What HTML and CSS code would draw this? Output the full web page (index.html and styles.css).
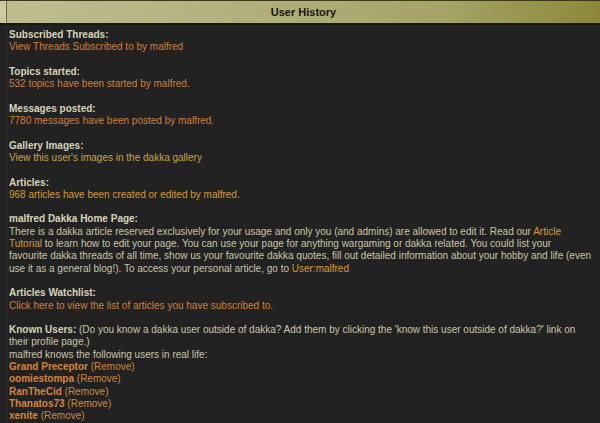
FILE: index.html
```html
<!DOCTYPE html>
<html>
<head>
<meta charset="utf-8">
<link rel="stylesheet" href="styles.css">
</head>
<body>
<div class="page">
  <div class="hdr">
    <div class="hdr-edge"></div>
    <div class="hdr-title">User History</div>
  </div>
  <div class="content">
    <div class="block">
      <div class="h">Subscribed Threads:</div>
      <a class="lnk">View Threads Subscribed to by malfred</a>
    </div>
    <div class="block">
      <div class="h">Topics started:</div>
      <a class="lnk">532 topics have been started by malfred.</a>
    </div>
    <div class="block">
      <div class="h">Messages posted:</div>
      <a class="lnk">7780 messages have been posted by malfred.</a>
    </div>
    <div class="block">
      <div class="h">Gallery Images:</div>
      <a class="lnk gold">View this user's images in the dakka gallery</a>
    </div>
    <div class="block">
      <div class="h">Articles:</div>
      <a class="lnk amber">968 articles have been created or edited by malfred.</a>
    </div>
    <div class="block">
      <div class="h">malfred Dakka Home Page:</div>
      <div class="txt">There is a dakka article reserved exclusively for your usage and only you (and admins) are allowed to edit it. Read our <a class="lnk amber">Article<br>Tutorial</a> to learn how to edit your page. You can use your page for anything wargaming or dakka related. You could list your<br>favourite dakka threads of all time, show us your favourite dakka quotes, fill out detailed information about your hobby and life (even<br>use it as a general blog!). To access your personal article, go to <a class="lnk amber">User:malfred</a></div>
    </div>
    <div class="block">
      <div class="h">Articles Watchlist:</div>
      <a class="lnk">Click here to view the list of articles you have subscribed to.</a>
    </div>
    <div class="block">
      <div class="txt"><b class="h">Known Users:</b> (Do you know a dakka user outside of dakka? Add them by clicking the 'know this user outside of dakka?' link on<br>their profile page.)</div>
      <div class="txt">malfred knows the following users in real life:</div>
      <ul class="users">
        <li><a class="user">Grand Preceptor</a> <a class="rm">(Remove)</a></li>
        <li><a class="user">oomiestompa</a> <a class="rm">(Remove)</a></li>
        <li><a class="user">RanTheCid</a> <a class="rm">(Remove)</a></li>
        <li><a class="user">Thanatos73</a> <a class="rm">(Remove)</a></li>
        <li><a class="user">xenite</a> <a class="rm">(Remove)</a></li>
      </ul>
    </div>
  </div>
</div>
</body>
</html>
```

FILE: styles.css
```css
html, body {
  margin: 0;
  padding: 0;
  background: #222222;
}
.page {
  width: 600px;
  height: 423px;
  overflow: hidden;
  font-family: "Liberation Sans", Arial, sans-serif;
  font-size: 10px;
  line-height: 12.3px;
  color: #c9c6a8;
}
.hdr {
  display: flex;
  height: 22px;
  border-top: 1px solid #3c3a1c;
  border-bottom: 2px solid #191910;
}
.hdr-edge {
  width: 6px;
  background: #cbcaa2;
  border-right: 1px solid #6d6c45;
}
.hdr-title {
  flex: 1;
  text-align: center;
  font-weight: bold;
  font-size: 11px;
  line-height: 22px;
  color: #16160c;
  background: linear-gradient(90deg, #bdbd90 0%, #b6b584 25%, #aead76 50%, #a4a265 75%, #8c8838 100%);
}
.content {
  margin-left: 6px;
  border-left: 1px solid #303030;
  padding: 4px 0 0 2px;
  min-height: 400px;
}
.block {
  margin-bottom: 12.3px;
}
.h {
  font-weight: bold;
  color: #d6d4b8;
}
.lnk {
  color: #cf803c;
}
.lnk.gold {
  color: #c9a444;
}
.lnk.amber {
  color: #d39c34;
}
.users {
  list-style: none;
  margin: 0;
  padding: 0;
}
.user {
  font-weight: bold;
  color: #d4853a;
}
.rm {
  color: #cf883e;
}
```
